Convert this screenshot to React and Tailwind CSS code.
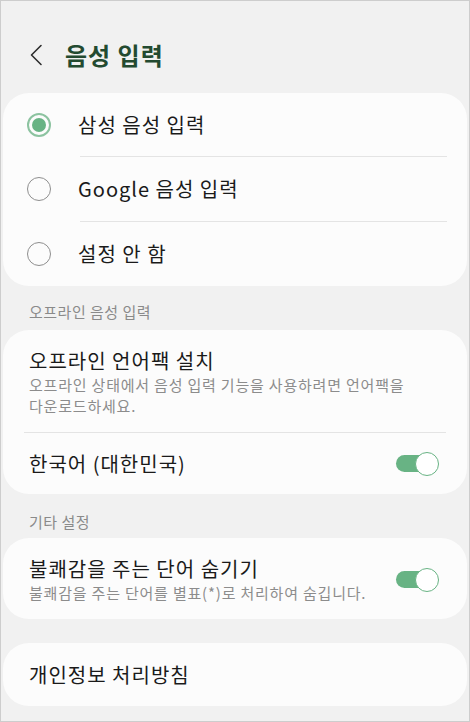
import React from "react";

const font = { fontFamily: '"Noto Sans CJK KR", "Noto Sans", sans-serif' };

function Radio({ checked }) {
  if (checked) {
    return (
      <div className="w-[24px] h-[24px] rounded-full border-[2px] border-[#8cc3a0] flex items-center justify-center shrink-0">
        <div className="w-[14px] h-[14px] rounded-full bg-[#68b384]" />
      </div>
    );
  }
  return <div className="w-[24px] h-[24px] rounded-full border-[1.5px] border-[#8e8e8e] shrink-0" />;
}

function Toggle() {
  return (
    <div className="relative w-[43px] h-[24px] flex items-center shrink-0">
      <div className="w-[38px] h-[17px] rounded-full bg-[#68b384]" />
      <div className="absolute right-0 top-0 w-[24px] h-[24px] rounded-full bg-white border-[1.5px] border-[#68b384]" />
    </div>
  );
}

const mainText = "text-[20px] tracking-[1px] text-[#1a1a1a]";
const subText = "text-[15px] leading-[21px] tracking-[0.8px] text-[#8c8c8c]";
const sectionText = "text-[15px] leading-[20px] tracking-[0.5px] text-[#8a8a8a]";

export default function App() {
  return (
    <div style={font} className="w-[470px] h-[722px] bg-[#f1f1f1] border border-[#cdcdcd] overflow-hidden px-[2px]">
      {/* header */}
      <div className="flex items-center h-[34px] mt-[37px] mb-[21px]">
        <svg width="14" height="22" viewBox="0 0 14 22" className="ml-[26px]" fill="none">
          <path d="M12 1.5 L2.5 11 L12 20.5" stroke="#2e2e2e" strokeWidth="1.6" strokeLinecap="round" strokeLinejoin="round" />
        </svg>
        <div className="ml-[22px] text-[24px] tracking-[1px] font-bold text-[#234a30] leading-[34px]">음성 입력</div>
      </div>

      {/* card 1 */}
      <div className="bg-[#fcfcfc] rounded-[26px]">
        <div className="h-[63px] flex items-center pl-[24px]">
          <Radio checked />
          <span className={`ml-[27px] ${mainText}`}>삼성 음성 입력</span>
        </div>
        <div className="ml-[77px] mr-[20px] h-px bg-[#e4e4e4]" />
        <div className="h-[64px] flex items-center pl-[24px]">
          <Radio />
          <span className={`ml-[27px] ${mainText}`}>Google 음성 입력</span>
        </div>
        <div className="ml-[77px] mr-[20px] h-px bg-[#e4e4e4]" />
        <div className="h-[64px] flex items-center pl-[24px]">
          <Radio />
          <span className={`ml-[27px] ${mainText}`}>설정 안 함</span>
        </div>
      </div>

      <div className={`pl-[26px] pt-[16px] pb-[8px] ${sectionText}`}>오프라인 음성 입력</div>

      {/* card 2 */}
      <div className="bg-[#fcfcfc] rounded-[26px]">
        <div className="pt-[18px] pb-[16px] pl-[26px] pr-[20px]">
          <div className={`leading-[26px] ${mainText}`}>오프라인 언어팩 설치</div>
          <div className={subText}>
            오프라인 상태에서 음성 입력 기능을 사용하려면 언어팩을
            <br />
            다운로드하세요.
          </div>
        </div>
        <div className="mx-[21px] h-px bg-[#e4e4e4]" />
        <div className="h-[61px] flex items-center justify-between pl-[26px] pr-[28px]">
          <span className={mainText}>한국어 (대한민국)</span>
          <Toggle />
        </div>
      </div>

      <div className={`pl-[26px] pt-[18px] pb-[6px] ${sectionText}`}>기타 설정</div>

      {/* card 3 */}
      <div className="bg-[#fcfcfc] rounded-[26px] flex items-center justify-between pl-[26px] pr-[28px] pt-[18px] pb-[16px]">
        <div>
          <div className={`leading-[26px] ${mainText}`}>불쾌감을 주는 단어 숨기기</div>
          <div className={subText}>불쾌감을 주는 단어를 별표(*)로 처리하여 숨깁니다.</div>
        </div>
        <Toggle />
      </div>

      {/* card 4 */}
      <div className="mt-[24px] bg-[#fcfcfc] rounded-[26px] h-[63px] flex items-center pl-[26px]">
        <span className={mainText}>개인정보 처리방침</span>
      </div>
    </div>
  );
}
